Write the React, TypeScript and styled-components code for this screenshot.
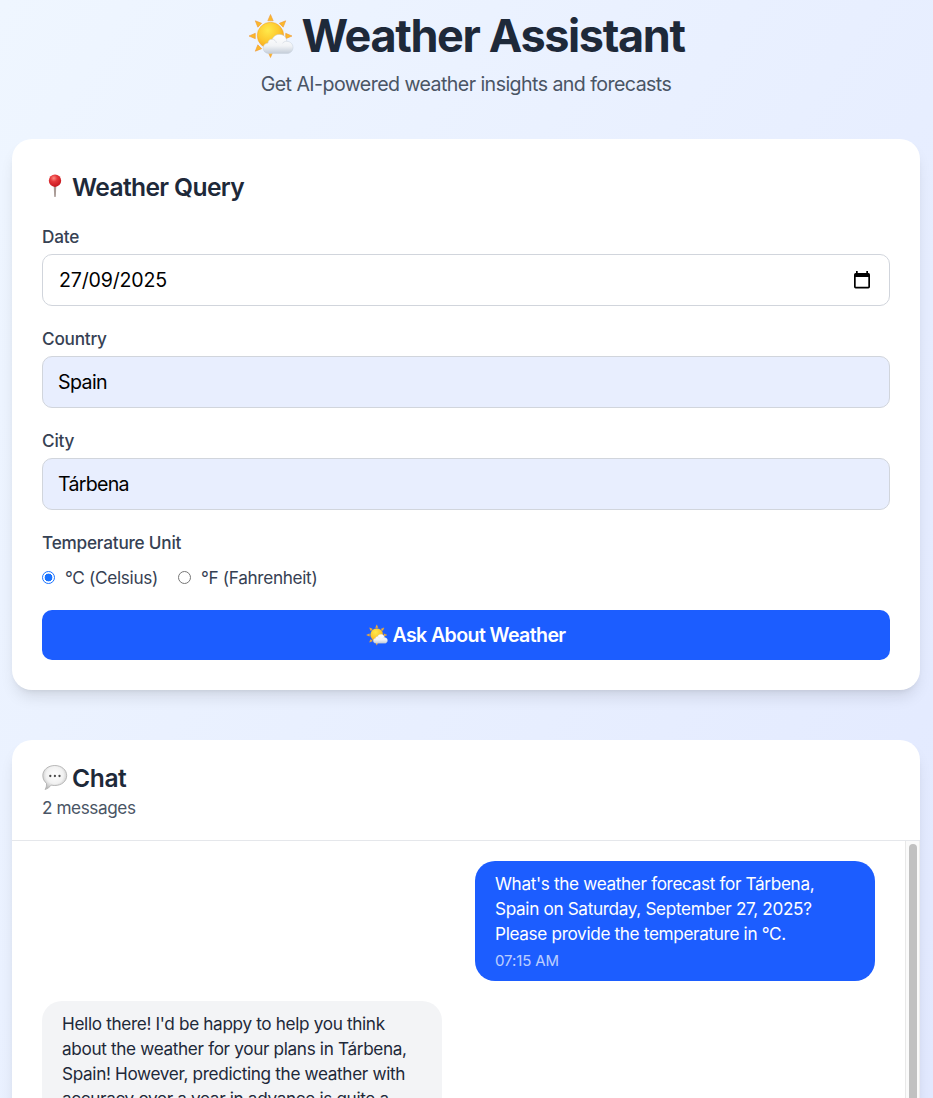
import React, { useState } from "react";
import styled, { createGlobalStyle } from "styled-components";

const GlobalStyle = createGlobalStyle`
  *, *::before, *::after { box-sizing: border-box; }
  html, body { margin: 0; padding: 0; }
  body {
    font-family: Inter, "Liberation Sans", sans-serif;
    -webkit-font-smoothing: antialiased;
    overflow: hidden;
  }
  h1, h2, p { margin: 0; }
`;

const Page = styled.div`
  height: 100vh;
  overflow: hidden;
  padding: 10px 13px 0 12px;
  background: linear-gradient(to bottom right, #eff6ff, #e0e7ff);
  background-size: 100% 1500px;
`;

const Header = styled.header`
  display: flex;
  flex-direction: column;
  align-items: center;
  margin-bottom: 40px;
`;

const Title = styled.h1`
  display: flex;
  align-items: center;
  gap: 8px;
  height: 50px;
  font-size: 45px;
  line-height: 50px;
  font-weight: 700;
  letter-spacing: -1.38px;
  color: #1e2939;
  white-space: nowrap;
  padding-top: 1px;
`;

const Subtitle = styled.p`
  margin-top: 10px;
  font-size: 19.6px;
  line-height: 29px;
  letter-spacing: -0.57px;
  color: #4a5565;
  white-space: nowrap;
`;

const Card = styled.section`
  background: #fff;
  border-radius: 20px;
  box-shadow: 0 10px 15px -3px rgba(0, 0, 0, 0.1), 0 4px 6px -4px rgba(0, 0, 0, 0.1);
`;

const QueryCard = styled(Card)`
  padding: 30px;
  margin-bottom: 50px;
`;

const SectionTitle = styled.h2<{ $spacing: number }>`
  display: flex;
  align-items: center;
  gap: 4px;
  height: 35px;
  padding-top: 1px;
  font-size: 24.6px;
  line-height: 35px;
  font-weight: 600;
  letter-spacing: ${(p) => p.$spacing}px;
  color: #1e2939;
`;

const Form = styled.form`
  display: flex;
  flex-direction: column;
  gap: 20px;
  margin-top: 20px;
`;

const Field = styled.div`
  display: flex;
  flex-direction: column;
  gap: 5px;
`;

const Label = styled.label`
  font-size: 17.2px;
  line-height: 25px;
  font-weight: 500;
  letter-spacing: -0.22px;
  color: #364153;
`;

const InputBox = styled.div<{ $filled?: boolean }>`
  display: flex;
  align-items: center;
  height: 52px;
  padding: 0 17px 0 ${(p) => (p.$filled ? 15 : 16)}px;
  border: 1px solid #d1d5dc;
  border-radius: 10px;
  background: ${(p) => (p.$filled ? "#e8eefe" : "#fff")};
`;

const Input = styled.input<{ $spacing: number }>`
  flex: 1;
  min-width: 0;
  border: 0;
  padding: 0;
  outline: 0;
  background: transparent;
  font: 400 19.6px/30px Inter, "Liberation Sans", sans-serif;
  letter-spacing: ${(p) => p.$spacing}px;
  color: #000;
`;

const Radios = styled.div`
  display: flex;
  gap: 20px;
  margin-top: 5px;
`;

const RadioLabel = styled.label`
  display: flex;
  align-items: center;
  gap: 10px;
  font-size: 17.2px;
  line-height: 25px;
  letter-spacing: -0.32px;
  color: #364153;
  white-space: nowrap;
`;

const Radio = styled.input`
  width: 13px;
  height: 13px;
  margin: 0;
  appearance: none;
  border-radius: 50%;
  border: 1px solid #767676;
  background: #fff;
  &:checked {
    border: 1px solid #1a73ff;
    background: radial-gradient(circle, #1a73ff 3.6px, #fff 4.2px);
  }
`;

const Submit = styled.button`
  display: flex;
  align-items: center;
  justify-content: center;
  gap: 4px;
  height: 50px;
  border: 0;
  border-radius: 10px;
  background: #1c5dff;
  color: #fff;
  font: 600 19.6px/30px Inter, "Liberation Sans", sans-serif;
  letter-spacing: -0.62px;
`;

const ChatCard = styled(Card)`
  overflow: hidden;
  height: 700px;
`;

const ChatHeader = styled.div`
  padding: 20px 30px;
  border-bottom: 1px solid #e5e7eb;
`;

const ChatCount = styled.p`
  font-size: 17.2px;
  line-height: 25px;
  letter-spacing: -0.42px;
  color: #4a5565;
`;

const ChatBody = styled.div`
  display: flex;
  height: 599px;
`;

const Messages = styled.div`
  flex: 1;
  display: flex;
  flex-direction: column;
  gap: 20px;
  padding: 20px 30px;
`;

const Track = styled.div`
  width: 15px;
  padding: 3px 2px 3px 3px;
  border-left: 1px solid #e8e8e8;
  border-right: 1px solid #ededed;
  background: #fafafa;
`;

const Thumb = styled.div`
  width: 8px;
  height: 480px;
  border-radius: 4px;
  background: #c1c1c1;
`;

const Bubble = styled.div<{ $mine?: boolean }>`
  align-self: ${(p) => (p.$mine ? "flex-end" : "flex-start")};
  width: 400px;
  padding: 10px 20px;
  border-radius: 20px;
  font-size: 17.2px;
  line-height: 25px;
  letter-spacing: -0.35px;
  white-space: pre;
  background: ${(p) => (p.$mine ? "#1c5dff" : "#f3f4f6")};
  color: ${(p) => (p.$mine ? "#fff" : "#1e2939")};
`;

const Time = styled.p`
  margin-top: 5px;
  font-size: 15px;
  line-height: 20px;
  letter-spacing: -0.1px;
  opacity: 0.7;
`;

const SunCloud = ({ size, id }: { size: number; id: string }) => (
  <svg width={size} height={size} viewBox="0 0 46 46">
    <defs>
      <radialGradient id={`${id}s`} cx="0.4" cy="0.3" r="0.75">
        <stop offset="0" stopColor="#ffe94a" />
        <stop offset="0.55" stopColor="#fdc92f" />
        <stop offset="1" stopColor="#f59c1a" />
      </radialGradient>
      <linearGradient id={`${id}c`} x1="0" y1="0" x2="0" y2="1">
        <stop offset="0" stopColor="#ffffff" />
        <stop offset="0.6" stopColor="#f1f3f6" />
        <stop offset="1" stopColor="#c3ccd8" />
      </linearGradient>
    </defs>
    <g fill="#fbb829" stroke="#ef9a3a" strokeWidth="0.6" strokeLinejoin="round">
      {[0, 45, 90, 135, 180, 225, 270, 315].map((a) => (
        <path key={a} d="M22.5 1.5L25.2 7.8H19.8Z" transform={`rotate(${a} 22.5 23)`} />
      ))}
    </g>
    <circle cx="22.5" cy="22.5" r="13.2" fill={`url(#${id}s)`} stroke="#f2a02c" strokeWidth="0.5" />
    <path
      d="M21 40.5C17.2 40.5 15.2 38 15.2 35.2C15.2 32.2 17.4 30.2 20 30C20 27.5 22 26 24.2 26.3C25.5 23 28.2 21.4 31.4 21.4C35.6 21.4 38.6 24.3 38.8 28.3C42.4 28.4 45 31 45 34.4C45 38 42.3 40.5 38.6 40.5Z"
      fill={`url(#${id}c)`}
      stroke="#c7d0dc"
      strokeWidth="0.5"
    />
    <path d="M24.2 26.3C26.5 26.5 28 28 28.4 30M38.8 28.3C37 28.2 35.4 29 34.6 30.4" fill="none" stroke="#d4dae3" strokeWidth="0.8" />
  </svg>
);

const Pin = () => (
  <svg width="26" height="26" viewBox="0 0 26 26">
    <defs>
      <radialGradient id="pin" cx="0.4" cy="0.3" r="0.7">
        <stop offset="0" stopColor="#ff8a80" />
        <stop offset="0.4" stopColor="#e5383b" />
        <stop offset="1" stopColor="#c5161d" />
      </radialGradient>
    </defs>
    <path d="M11.7 11.500h2.600l-.5 11q-.8 1.200-1.600 0Z" fill="#a89a95" />
    <circle cx="13" cy="6.700" r="6.200" fill="url(#pin)" />
  </svg>
);

const Speech = () => (
  <svg width="26" height="26" viewBox="0 0 26 26">
    <defs>
      <radialGradient id="speech" cx="0.5" cy="0.4" r="0.6">
        <stop offset="0" stopColor="#ffffff" />
        <stop offset="0.6" stopColor="#f1f1f1" />
        <stop offset="1" stopColor="#bcbcbc" />
      </radialGradient>
    </defs>
    <path
      d="M12.8 .5C19.6 .5 24.7 4.900 24.700 10.500C24.700 16.300 19.600 20.500 12.800 20.500C11.600 20.500 10.300 20.400 9.200 20.100C7.700 22 5.300 24.100 3 24.400C4.200 22.900 4.700 20.900 4.500 18.300C2.200 16.500 .8 13.800 .8 10.500C.8 4.900 6 .5 12.800 .5Z"
      fill="url(#speech)"
      stroke="#ababab"
      strokeWidth="0.8"
    />
    <g fill="#4a4a4a">
      <circle cx="8.300" cy="11" r="1.150" />
      <circle cx="12.900" cy="11" r="1.150" />
      <circle cx="17.500" cy="11" r="1.150" />
    </g>
  </svg>
);

const CalendarIcon = () => (
  <svg width="20" height="20" viewBox="0 0 20 20">
    <path d="M4 1h1.700v2h8.600V1H16v2h.500A1.700 1.700 0 0 1 18 4.700v12.100a1.700 1.700 0 0 1-1.700 1.700H3.700A1.700 1.700 0 0 1 2 16.800V4.700A1.700 1.700 0 0 1 3.700 3H4ZM3.700 7v9.800h12.600V7Z" fill="#000" fillRule="evenodd" />
  </svg>
);

export default function App() {
  const [unit, setUnit] = useState("C");
  return (
    <>
      <GlobalStyle />
      <Page>
        <Header>
          <Title>
            <SunCloud size={46} id="big" />
            Weather Assistant
          </Title>
          <Subtitle>Get AI-powered weather insights and forecasts</Subtitle>
        </Header>
        <QueryCard>
          <SectionTitle $spacing={-0.62}>
            <Pin />
            Weather Query
          </SectionTitle>
          <Form onSubmit={(e) => e.preventDefault()}>
            <Field>
              <Label htmlFor="date">Date</Label>
              <InputBox>
                <Input id="date" $spacing={-0.18} defaultValue="27/09/2025" />
                <CalendarIcon />
              </InputBox>
            </Field>
            <Field>
              <Label htmlFor="country">Country</Label>
              <InputBox $filled>
                <Input id="country" $spacing={-0.6} defaultValue="Spain" />
              </InputBox>
            </Field>
            <Field>
              <Label htmlFor="city">City</Label>
              <InputBox $filled>
                <Input id="city" $spacing={-0.72} defaultValue="Tárbena" />
              </InputBox>
            </Field>
            <Field>
              <Label as="span">Temperature Unit</Label>
              <Radios>
                <RadioLabel>
                  <Radio type="radio" name="unit" checked={unit === "C"} onChange={() => setUnit("C")} />
                  °C (Celsius)
                </RadioLabel>
                <RadioLabel>
                  <Radio type="radio" name="unit" checked={unit === "F"} onChange={() => setUnit("F")} />
                  °F (Fahrenheit)
                </RadioLabel>
              </Radios>
            </Field>
            <Submit type="submit">
              <SunCloud size={22} id="small" />
              Ask About Weather
            </Submit>
          </Form>
        </QueryCard>
        <ChatCard>
          <ChatHeader>
            <SectionTitle $spacing={-0.4}>
              <Speech />
              Chat
            </SectionTitle>
            <ChatCount>2 messages</ChatCount>
          </ChatHeader>
          <ChatBody>
            <Messages>
              <Bubble $mine>
                {"What's the weather forecast for Tárbena,\nSpain on Saturday, September 27, 2025?\nPlease provide the temperature in °C."}
                <Time>07:15 AM</Time>
              </Bubble>
              <Bubble>
                {"Hello there! I'd be happy to help you think\nabout the weather for your plans in Tárbena,\nSpain! However, predicting the weather with\naccuracy over a year in advance is quite a"}
              </Bubble>
            </Messages>
            <Track>
              <Thumb />
            </Track>
          </ChatBody>
        </ChatCard>
      </Page>
    </>
  );
}
